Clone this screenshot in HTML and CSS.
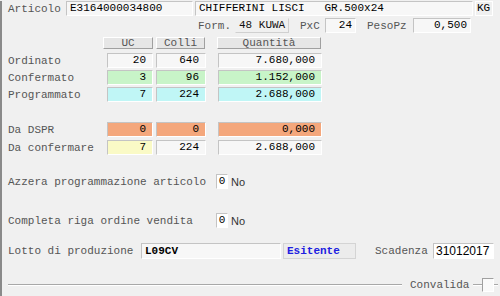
FILE: index.html
```html
<!DOCTYPE html>
<html lang="it">
  <head>
    <meta charset="UTF-8" />
    <title>Programmazione articolo</title>
    <link rel="stylesheet" href="styles.css">
  </head>
  <body>
    <div id="panel">
      <div class="row top">
        <span class="lbl w-art">Articolo</span>
        <div class="fld w-code">E3164000034800</div>
        <div class="fld w-desc">CHIFFERINI LISCI &nbsp;&nbsp;GR.500x24</div>
        <div class="fld kg">KG</div>
      </div>

      <div class="row sub">
        <span class="lbl w-form">Form.</span>
        <div class="fld w-formv">48 KUWA</div>
        <span class="lbl w-pxc">PxC</span>
        <div class="fld num w-pxcv">24</div>
        <span class="lbl w-peso">PesoPz</span>
        <div class="fld num w-pesov">0,500</div>
      </div>

      <div class="row heads">
        <span class="w-name"></span>
        <div class="hbtn c-uc">UC</div>
        <div class="hbtn c-colli">Colli</div>
        <div class="hbtn c-qta">Quantità</div>
      </div>

      <div class="row data">
        <span class="lbl w-name">Ordinato</span>
        <div class="fld num c-uc">20</div>
        <div class="fld num c-colli">640</div>
        <div class="fld num c-qta">7.680,000</div>
      </div>
      <div class="row data">
        <span class="lbl w-name">Confermato</span>
        <div class="fld num c-uc green">3</div>
        <div class="fld num c-colli green">96</div>
        <div class="fld num c-qta green">1.152,000</div>
      </div>
      <div class="row data">
        <span class="lbl w-name">Programmato</span>
        <div class="fld num c-uc cyan">7</div>
        <div class="fld num c-colli cyan">224</div>
        <div class="fld num c-qta cyan">2.688,000</div>
      </div>

      <div class="row data dspr">
        <span class="lbl w-name">Da DSPR</span>
        <div class="fld num c-uc orange">0</div>
        <div class="fld num c-colli orange">0</div>
        <div class="fld num c-qta orange">0,000</div>
      </div>
      <div class="row data">
        <span class="lbl w-name">Da confermare</span>
        <div class="fld num c-uc yellow">7</div>
        <div class="fld num c-colli">224</div>
        <div class="fld num c-qta">2.688,000</div>
      </div>

      <div class="row flag azzera">
        <span class="lbl w-flag">Azzera programmazione articolo</span>
        <div class="fld box">0</div>
        <span class="no">No</span>
      </div>
      <div class="row flag completa">
        <span class="lbl w-flag">Completa riga ordine vendita</span>
        <div class="fld box">0</div>
        <span class="no">No</span>
      </div>

      <div class="row lotto">
        <span class="lbl w-lotto">Lotto di produzione</span>
        <div class="fld bold w-lottov">L09CV</div>
        <div class="fld esito">Esitente</div>
        <span class="lbl w-scad">Scadenza</span>
        <div class="fld date">31012017</div>
      </div>

      <div class="row foot">
        <div class="groove"></div>
        <span class="lbl conv">Convalida</span>
        <div class="groove short"></div>
        <div class="check"></div>
        <div class="groove tiny"></div>
      </div>
    </div>
  </body>
</html>
```

FILE: styles.css
```css
body {
  margin: 0;
  padding: 0;
  width: 500px;
  height: 296px;
  overflow: hidden;
  background-color: #f0f0f0;
  font-family: "Liberation Mono", "Courier New", monospace;
  font-size: 11px;
  color: #000;
}

#panel {
  height: 296px;
  box-sizing: border-box;
  border-left: 2px solid #8a8a8a;
  padding-left: 6px;
}

.row {
  display: flex;
  align-items: center;
}

.lbl {
  color: #555;
  white-space: pre;
}

.fld {
  box-sizing: border-box;
  height: 15px;
  line-height: 13px;
  padding: 0 3px;
  background-color: #f7f7f7;
  border: 1px solid #fff;
  border-top-color: #c4c4c4;
  border-left-color: #c4c4c4;
  white-space: pre;
  overflow: hidden;
}

.num {
  text-align: right;
  padding-right: 6px;
}

/* top rows */
.top {
  margin-top: 1px;
  height: 15px;
}
.w-art { width: 58px; }
.w-code { width: 127px; margin-right: 2px; }
.w-desc { width: 278px; margin-right: 2px; }
.kg {
  width: 18px;
  padding: 0 1px;
  background-color: #f0f0f0;
  border-color: #fff;
}

.sub {
  margin-top: 2px;
  height: 15px;
  padding-left: 190px;
}
.w-form { width: 37px; }
.w-formv {
  width: 54px;
  color: #111;
  background-color: #f0f0f0;
  border-color: #f0f0f0 #d0d0d0 #d0d0d0 #f0f0f0;
}
.w-pxc { width: 25px; margin-left: 11px; }
.w-pxcv { width: 31px; padding-right: 3px; }
.w-peso { width: 46px; margin-left: 11px; }
.w-pesov { width: 58px; padding-right: 3px; }

/* quantity grid */
.heads {
  margin-top: 4px;
  height: 12px;
}
.hbtn {
  box-sizing: border-box;
  height: 12px;
  line-height: 10px;
  text-align: center;
  color: #555;
  background-color: #e6e6e6;
  border: 1px solid #a0a0a0;
  border-top-color: #fff;
  border-left-color: #fff;
}

.w-name { width: 99px; }
.c-uc { width: 46px; margin-right: 3px; }
.c-colli { width: 50px; margin-right: 12px; }
.c-qta { width: 104px; }
.heads .c-uc { width: 50px; margin-left: -4px; margin-right: 3px; }
.heads .c-colli { width: 49px; margin-right: 12px; }

.data {
  margin-top: 2px;
  height: 15px;
}
.heads + .data { margin-top: 4px; }
.dspr { margin-top: 20px; }
.dspr + .data { margin-top: 3px; }

.green { background-color: #c8f4c8; }
.cyan { background-color: #c0f6f6; }
.orange { background-color: #f4a77c; }
.yellow { background-color: #fafac6; }

/* flags */
.flag { height: 15px; }
.azzera { margin-top: 19px; }
.completa { margin-top: 24px; }
.w-flag { width: 208px; }
.box {
  width: 12px;
  padding: 0 1px;
  text-align: center;
  background-color: #fff;
}
.no {
  margin-left: 3px;
  font-family: "Liberation Sans", Arial, sans-serif;
  font-size: 11px;
  color: #333;
}

/* lotto */
.lotto {
  margin-top: 15px;
  height: 16px;
}
.lotto .fld { height: 16px; line-height: 14px; }
.w-lotto { width: 133px; }
.w-lottov { width: 140px; margin-right: 2px; }
.bold { font-weight: bold; }
.esito {
  width: 73px;
  color: #2020e0;
  font-weight: bold;
  background-color: #ececec;
  border-color: #d4d4d4;
}
.w-scad { width: 58px; margin-left: 19px; }
.date {
  width: 61px;
  padding: 0 2px;
  font-family: "Liberation Sans", Arial, sans-serif;
  font-size: 12px;
  background-color: #fff;
}

/* footer */
.foot {
  margin-top: 18px;
  height: 16px;
}
.groove {
  width: 394px;
  height: 0;
  border-top: 1px solid #a8a8a8;
  border-bottom: 1px solid #fff;
}
.groove.short { width: 9px; margin-left: 4px; }
.groove.tiny { width: 4px; }
.conv { margin-left: 8px; }
.check {
  box-sizing: border-box;
  width: 12px;
  height: 14px;
  background-color: #fafafa;
  border: 1px solid #fff;
  border-top-color: #a0a0a0;
  border-left-color: #a0a0a0;
}
```
